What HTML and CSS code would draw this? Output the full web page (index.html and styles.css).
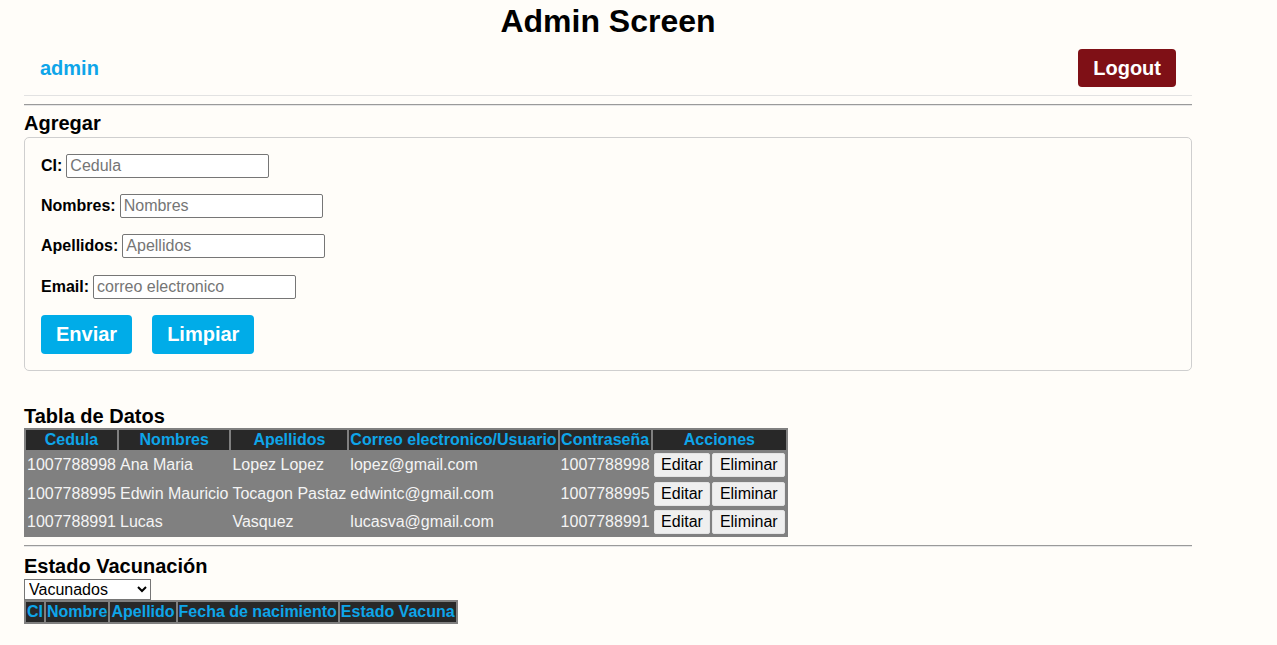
FILE: index.html
```html
<!DOCTYPE html>
<html lang="es">
<head>
<meta charset="utf-8">
<title>Admin Screen</title>
<link rel="stylesheet" href="styles.css">
</head>
<body>
<div class="page">
  <h1 class="title">Admin Screen</h1>
  <nav class="nav">
    <a class="user" href="#">admin</a>
    <button class="logout" type="button">Logout</button>
  </nav>
  <hr class="rule">

  <h3 class="section-title">Agregar</h3>
  <form class="form-box">
    <div class="row"><label>CI:</label> <input class="field" type="text" placeholder="Cedula"></div>
    <div class="row"><label>Nombres:</label> <input class="field" type="text" placeholder="Nombres"></div>
    <div class="row"><label>Apellidos:</label> <input class="field" type="text" placeholder="Apellidos"></div>
    <div class="row"><label>Email:</label> <input class="field" type="text" placeholder="correo electronico"></div>
    <div class="actions">
      <button class="btn-blue" type="button">Enviar</button>
      <button class="btn-blue" type="button">Limpiar</button>
    </div>
  </form>

  <h3 class="section-title tabla-title">Tabla de Datos</h3>
  <table class="data">
    <thead>
      <tr><th>Cedula</th><th>Nombres</th><th>Apellidos</th><th>Correo electronico/Usuario</th><th>Contraseña</th><th>Acciones</th></tr>
    </thead>
    <tbody>
      <tr><td>1007788998</td><td>Ana Maria</td><td>Lopez Lopez</td><td>lopez@gmail.com</td><td>1007788998</td><td class="acts"><button class="small">Editar</button><button class="small">Eliminar</button></td></tr>
      <tr><td>1007788995</td><td>Edwin Mauricio</td><td>Tocagon Pastaz</td><td>edwintc@gmail.com</td><td>1007788995</td><td class="acts"><button class="small">Editar</button><button class="small">Eliminar</button></td></tr>
      <tr><td>1007788991</td><td>Lucas</td><td>Vasquez</td><td>lucasva@gmail.com</td><td>1007788991</td><td class="acts"><button class="small">Editar</button><button class="small">Eliminar</button></td></tr>
    </tbody>
  </table>
  <hr class="rule">

  <h3 class="section-title estado-title">Estado Vacunación</h3>
  <select class="filter">
    <option>Vacunados</option>
    <option>No vacunados</option>
  </select>
  <table class="data">
    <thead>
      <tr><th>CI</th><th>Nombre</th><th>Apellido</th><th>Fecha de nacimiento</th><th>Estado Vacuna</th></tr>
    </thead>
    <tbody></tbody>
  </table>
</div>
</body>
</html>
```

FILE: styles.css
```css
* { box-sizing: border-box; }

html, body {
  margin: 0;
  background: #fffdf9;
  font-family: "Liberation Sans", Arial, sans-serif;
  font-size: 16px;
  color: #000;
}

.page {
  width: 1168px;
  margin-left: 24px;
}

.title {
  margin: 3px 0 0;
  font-size: 32px;
  line-height: 37px;
  font-weight: bold;
  text-align: center;
}

.nav {
  display: flex;
  justify-content: space-between;
  align-items: center;
  padding: 9px 16px 8px;
  border-bottom: 1px solid #e2e2e2;
}

.user {
  color: #0ea5e9;
  font-size: 20px;
  font-weight: bold;
  text-decoration: none;
}

.logout {
  height: 38px;
  padding: 0 15px;
  border: none;
  border-radius: 4px;
  background: #7f1016;
  color: #fff;
  font-family: inherit;
  font-size: 20px;
  font-weight: bold;
}

.rule {
  margin: 8px 0 0;
  height: 0;
  border: none;
  border-top: 1px solid #9a9a9a;
  border-bottom: 1px solid #e6e6e6;
}

.section-title {
  margin: 6px 0 0;
  font-size: 20px;
  line-height: 23px;
  font-weight: bold;
}

.form-box {
  margin-top: 2px;
  border: 1px solid #cfcfcf;
  border-radius: 5px;
  padding: 16px;
}

.row {
  display: flex;
  align-items: center;
  gap: 4px;
  height: 24px;
  margin-bottom: 16.2px;
  font-weight: bold;
}

.field {
  width: 203px;
  height: 24px;
  padding: 1px 3px;
  border: 1px solid #767676;
  border-radius: 2px;
  background: #fff;
  font-family: inherit;
  font-size: 16px;
  color: #000;
}

.field::placeholder { color: #757575; }

.actions {
  display: flex;
  gap: 20px;
}

.btn-blue {
  height: 39px;
  padding: 0 15px;
  border: none;
  border-radius: 4px;
  background: #00ace8;
  color: #fff;
  font-family: inherit;
  font-size: 20px;
  font-weight: bold;
}

.tabla-title { margin-top: 34px; }

.data {
  border-collapse: separate;
  border-spacing: 2px;
  background: #808080;
  font-size: 16px;
}

.data th {
  background: #282828;
  color: #0ea5e9;
  font-weight: bold;
  padding: 1px;
  line-height: 18px;
  white-space: nowrap;
}

.data td {
  height: 26.5px;
  color: #f4f4f4;
  padding: 1px;
  line-height: 18px;
  white-space: nowrap;
  vertical-align: middle;
}

.small {
  height: 24px;
  padding: 1px 6.5px;
  border: 1px solid #e4e4e4;
  border-radius: 2px;
  background: #efefef;
  color: #000;
  font-family: inherit;
  font-size: 16px;
  vertical-align: middle;
}

.small + .small { margin-left: 2px; }

.estado-title { margin-top: 8px; }

.filter {
  display: block;
  width: 127px;
  height: 21px;
  margin-top: 1px;
  padding: 0;
  border: 1px solid #767676;
  border-radius: 0;
  background: #fff;
  font-family: inherit;
  font-size: 16px;
  color: #000;
}
```
